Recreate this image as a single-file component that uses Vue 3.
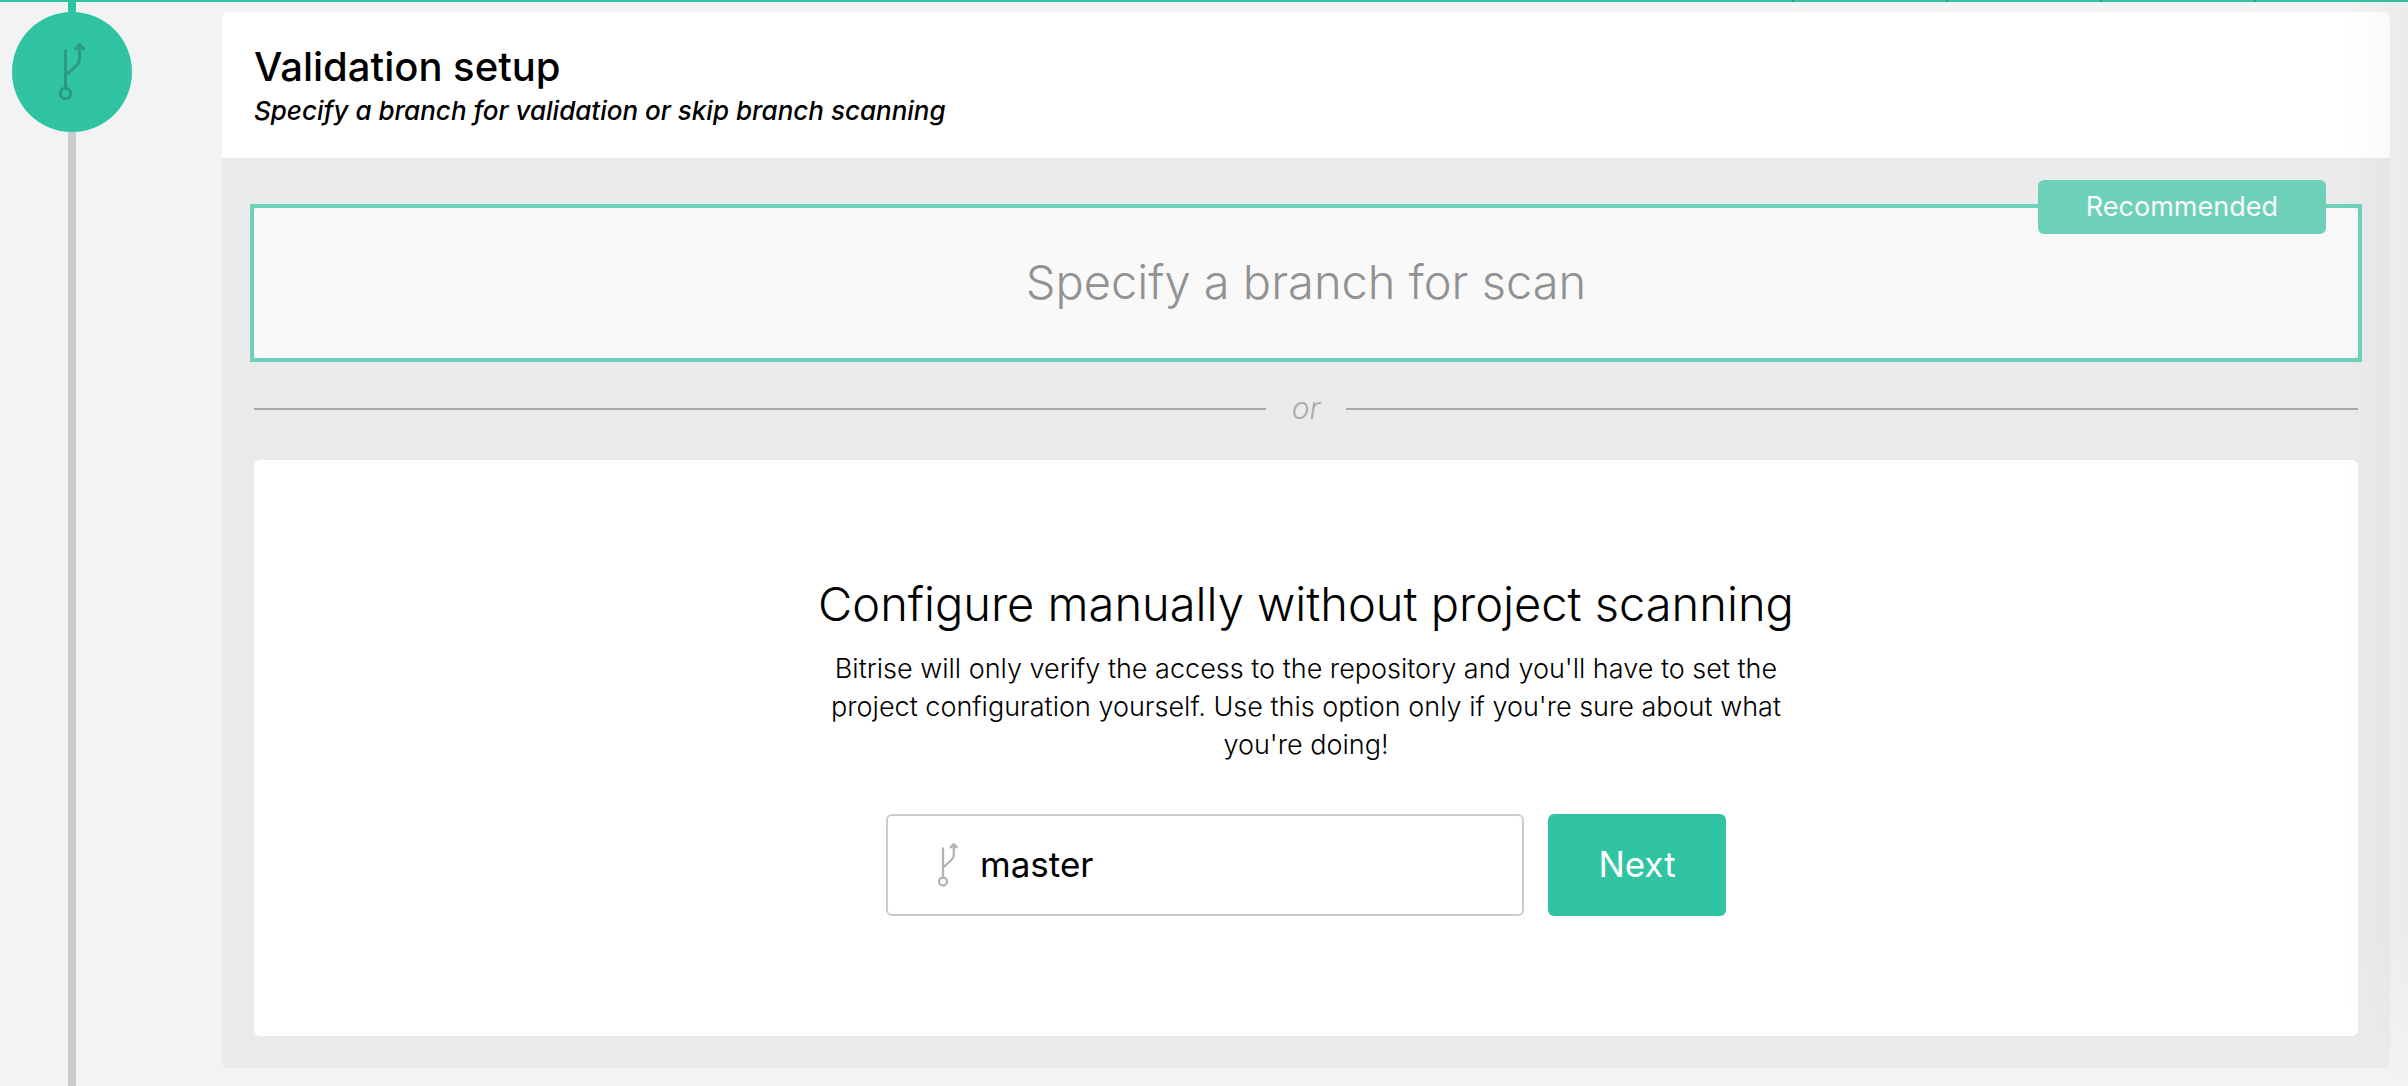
<script setup>
import { ref } from 'vue'

const branch = ref('master')
const tabs = 4
</script>

<template>
  <div class="page">
    <div class="topbar" aria-hidden="true">
      <span v-for="n in tabs" :key="n" class="topbar-tab"></span>
    </div>

    <div class="step">
      <div class="rail" aria-hidden="true">
        <div class="rail-done"></div>
        <div class="rail-badge">
          <svg class="rail-icon" viewBox="0 0 28 60">
            <path d="M7.5 8.5V46.5M7.5 33.5L18.5 23.5Q21.5 20.5 21.5 17V3M17.5 7L21.5 2.5L25.5 7" />
            <circle cx="7.5" cy="51.5" r="5.2" />
          </svg>
        </div>
        <div class="rail-rest"></div>
      </div>

      <main class="card">
        <header class="card-header">
          <h1>Validation setup</h1>
          <p>Specify a branch for validation or skip branch scanning</p>
        </header>

        <div class="card-body">
          <div class="option-frame">
            <button type="button" class="option">Specify a branch for scan</button>
            <span class="flag">Recommended</span>
          </div>

          <div class="divider"><span>or</span></div>

          <section class="manual">
            <h2>Configure manually without project scanning</h2>
            <p>
              Bitrise will only verify the access to the repository and you'll have to set the
              project configuration yourself. Use this option only if you're sure about what
              you're doing!
            </p>
            <form class="branch-form" @submit.prevent>
              <label class="branch-field">
                <svg class="branch-icon" viewBox="0 0 28 60" aria-hidden="true">
                  <path d="M7.5 8.5V46.5M7.5 33.5L18.5 23.5Q21.5 20.5 21.5 17V3M17.5 7L21.5 2.5L25.5 7" />
                  <circle cx="7.5" cy="51.5" r="5.2" />
                </svg>
                <input v-model="branch" type="text" aria-label="Branch" />
              </label>
              <button type="submit" class="next">Next</button>
            </form>
          </section>
        </div>
      </main>
    </div>
  </div>
</template>

<style>
body {
  margin: 0;
  background: #f3f3f3;
}
</style>

<style scoped>
.page {
  position: relative;
  display: flex;
  flex-direction: column;
  min-height: 100vh;
  background: #f3f3f3;
  color: #000;
  font-family: Inter, "Open Sans", sans-serif;
}

.page::after {
  content: "";
  position: absolute;
  top: 0;
  right: 0;
  bottom: 0;
  width: 64px;
  background: linear-gradient(to right, rgba(0, 0, 0, 0), rgba(0, 0, 0, 0.03));
  mask-image: linear-gradient(to bottom, #000 85%, transparent);
  pointer-events: none;
}

h1, h2, p {
  margin: 0;
}

button, input {
  font-family: inherit;
}

.topbar {
  display: flex;
  justify-content: flex-end;
  height: 2px;
  background: #31c4a2;
}

.topbar-tab {
  box-sizing: border-box;
  width: 154px;
  border-left: 2px solid #2a9f84;
}

.step {
  flex: 1;
  display: flex;
}

.rail {
  display: flex;
  flex-direction: column;
  align-items: center;
  width: 144px;
  flex: none;
}

.rail-done {
  width: 8px;
  height: 10px;
  background: #31c4a2;
}

.rail-badge {
  display: flex;
  align-items: center;
  justify-content: center;
  width: 120px;
  height: 120px;
  border-radius: 50%;
  background: #31c4a2;
}

.rail-rest {
  flex: 1;
  width: 8px;
  background: #ccc;
}

.rail-icon,
.branch-icon {
  fill: none;
  stroke-width: 3;
  stroke-linecap: round;
  stroke-linejoin: round;
}

.rail-icon {
  width: 28px;
  height: 60px;
  stroke: #2a9a80;
}

.card {
  flex: 1;
  align-self: flex-start;
  margin: 10px 18px 18px 78px;
  border-radius: 6px;
  background: #ebebeb;
  overflow: hidden;
}

.card-header {
  padding: 33px 32px 31px;
  background: #fff;
}

.card-header h1 {
  margin-bottom: 6px;
  font-size: 40px;
  font-weight: 500;
  line-height: 44px;
}

.card-header p {
  font-size: 26px;
  font-style: italic;
  font-weight: 500;
  line-height: 32px;
}

.card-body {
  padding: 46px 32px 32px;
}

.option-frame {
  position: relative;
  margin: 0 -4px;
  border: 4px solid #6dd1ba;
}

.option {
  display: block;
  width: 100%;
  height: 150px;
  padding: 0 0 4px;
  border: 0;
  border-radius: 6px;
  background: #f9f9f9;
  color: #929292;
  font-size: 47px;
  font-weight: 300;
}

.flag {
  position: absolute;
  top: -28px;
  right: 32px;
  padding: 0 48px;
  border-radius: 6px;
  background: #6dd1ba;
  color: #fafafa;
  font-size: 27px;
  line-height: 54px;
}

.divider {
  display: flex;
  align-items: center;
  height: 94px;
  margin-bottom: 4px;
  color: #aaa;
  font-size: 30px;
  font-style: italic;
  font-weight: 300;
}

.divider::before,
.divider::after {
  content: "";
  flex: 1;
  height: 2px;
  background: #aaa;
}

.divider span {
  width: 80px;
  padding-bottom: 2px;
  text-align: center;
}

.manual {
  display: flex;
  flex-direction: column;
  align-items: center;
  padding: 116px 32px 120px;
  border-radius: 6px;
  background: #fff;
  text-align: center;
}

.manual h2 {
  margin-bottom: 18px;
  font-size: 47px;
  font-weight: 300;
  line-height: 56px;
}

.manual p {
  max-width: 960px;
  margin-bottom: 50px;
  font-size: 27px;
  font-weight: 300;
  line-height: 38px;
}

.branch-form {
  display: flex;
  gap: 24px;
  width: 100%;
  max-width: 840px;
}

.branch-field {
  box-sizing: border-box;
  display: flex;
  flex: 1;
  align-items: center;
  gap: 20px;
  min-width: 0;
  height: 102px;
  padding: 0 48px;
  border: 2px solid #ccc;
  border-radius: 6px;
}

.branch-icon {
  flex: none;
  width: 24px;
  height: 46px;
  stroke: #b3b3b3;
}

.branch-field input {
  flex: 1;
  min-width: 0;
  padding: 0 0 2px;
  border: 0;
  outline: 0;
  background: transparent;
  color: #000;
  font-size: 35px;
}

.next {
  width: 178px;
  padding: 0 0 2px;
  border: 0;
  border-radius: 6px;
  background: #31c4a2;
  color: #fff;
  font-size: 35px;
}
</style>
